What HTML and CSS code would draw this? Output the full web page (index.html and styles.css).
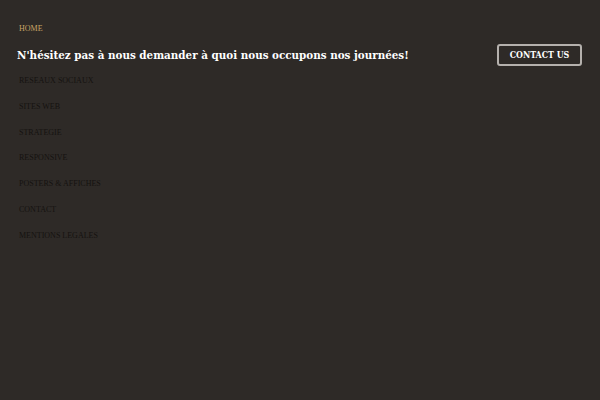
FILE: index.html
```html
<!DOCTYPE html>
<html lang="fr">
<head>
<meta charset="utf-8">
<link rel="stylesheet" href="styles.css">
</head>
<body>
<div class="page">
  <header class="bar">
    <h1 class="title">N'hésitez pas à nous demander à quoi nous occupons nos journées!</h1>
    <a class="cta" href="#">CONTACT US</a>
  </header>
  <nav class="menu">
    <a class="item active" href="#">HOME</a>
    <a class="item" href="#">AGENCE</a>
    <a class="item" href="#">RESEAUX SOCIAUX</a>
    <a class="item" href="#">SITES WEB</a>
    <a class="item" href="#">STRATEGIE</a>
    <a class="item" href="#">RESPONSIVE</a>
    <a class="item" href="#">POSTERS &amp; AFFICHES</a>
    <a class="item" href="#">CONTACT</a>
    <a class="item" href="#">MENTIONS LEGALES</a>
  </nav>
</div>
</body>
</html>
```
FILE: styles.css
```css
html, body {
  margin: 0;
  padding: 0;
  height: 100%;
  background: #2e2a27;
}
.page {
  position: relative;
  height: 100%;
}
.bar {
  position: relative;
  z-index: 2;
  display: flex;
  align-items: center;
  justify-content: space-between;
  padding: 44px 18px 0 17px;
}
.title {
  margin: 0;
  font-family: "DejaVu Serif Condensed", "DejaVu Serif", serif;
  font-weight: bold;
  font-size: 11.5px;
  color: #ffffff;
  white-space: nowrap;
}
.cta {
  display: block;
  width: 81px;
  height: 18px;
  line-height: 18px;
  text-align: center;
  border: 2px solid #b5b1ad;
  border-radius: 3px;
  font-family: "DejaVu Serif Condensed", "DejaVu Serif", serif;
  font-weight: bold;
  font-size: 8.8px;
  color: #ffffff;
  text-decoration: none;
}
.menu {
  position: absolute;
  z-index: 1;
  left: 19px;
  top: 23px;
  display: flex;
  flex-direction: column;
}
.item {
  display: block;
  height: 25.9px;
  font-family: "Liberation Serif", serif;
  font-size: 8px;
  line-height: 12px;
  color: #151210;
  text-decoration: none;
}
.item.active {
  color: #c8a566;
}
```
